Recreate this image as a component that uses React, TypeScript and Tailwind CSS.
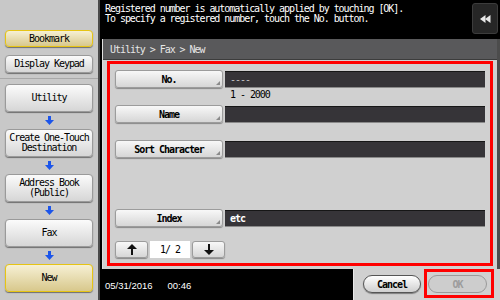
import React from 'react';

const mono = "font-['DejaVu_Sans_Mono',monospace] text-[10px] tracking-[-1.05px]";

function SideButton({ label, yellow, h = 'h-[28px]' }: { label: React.ReactNode; yellow?: boolean; h?: string }) {
  return (
    <div
      className={`mx-[5px] flex w-[88px] ${h} items-center justify-center rounded-[4px] border text-center leading-[10px] text-black shadow-[0_1px_1px_rgba(0,0,0,0.45)] ${mono} ${
        yellow
          ? 'border-[#e6c414] bg-gradient-to-b from-[#f6f0d4] to-[#d8c88c]'
          : 'border-[#9a9a9a] bg-gradient-to-b from-[#fbfbfb] to-[#d6d6d6]'
      }`}
    >
      {label}
    </div>
  );
}

function BlueArrow() {
  return (
    <div className="flex h-[17px] w-[98px] items-center justify-center">
      <svg width="9" height="9" viewBox="0 0 9 9">
        <rect x="3" y="0" width="3" height="4" fill="#1c55ea" />
        <polygon points="0,4 9,4 4.5,9" fill="#1c55ea" />
      </svg>
    </div>
  );
}

function FormButton({ label }: { label: string }) {
  return (
    <div
      className={`relative flex h-[18px] w-[108px] shrink-0 items-center justify-center rounded-[3px] border border-[#9c9c9c] bg-gradient-to-b from-[#f8f8f8] to-[#d6d6d6] font-bold text-black shadow-[0_1px_1px_rgba(0,0,0,0.35)] ${mono}`}
    >
      {label}
      <svg className="absolute bottom-[2px] right-[2px]" width="4" height="4" viewBox="0 0 4 4">
        <polygon points="4,0 4,4 0,4" fill="#8a8a8a" />
      </svg>
    </div>
  );
}

function Field({ text, white }: { text?: string; white?: boolean }) {
  return (
    <div
      className={`ml-[2px] flex h-[17px] flex-1 items-center border-t border-t-[#161616] border-b border-b-[#8a8a8a] bg-[#363438] pl-[5px] ${mono} ${
        white ? 'font-bold text-white' : 'text-[#c4c4c4]'
      }`}
    >
      {text}
    </div>
  );
}

function PageArrow({ up }: { up?: boolean }) {
  return (
    <div className="flex h-[17px] w-[33px] items-center justify-center rounded-[3px] border border-[#9c9c9c] bg-gradient-to-b from-[#f8f8f8] to-[#d6d6d6] shadow-[0_1px_1px_rgba(0,0,0,0.35)]">
      <svg width="10" height="11" viewBox="0 0 10 11">
        {up ? (
          <>
            <polygon points="5,0 10,5 0,5" fill="#111" />
            <rect x="4" y="4" width="2" height="7" fill="#111" />
          </>
        ) : (
          <>
            <rect x="4" y="0" width="2" height="7" fill="#111" />
            <polygon points="0,6 10,6 5,11" fill="#111" />
          </>
        )}
      </svg>
    </div>
  );
}

export default function App() {
  return (
    <div className="flex h-[300px] w-[500px] overflow-hidden bg-black">
      {/* Left sidebar */}
      <div className="flex w-[100px] shrink-0 flex-col border-r-2 border-[#4a4a4a] bg-[#c8c8c8]">
        <div className="flex h-[79px] flex-col gap-[8px] border-b border-b-[#a8a8a8] pt-[30px]">
          <SideButton label="Bookmark" yellow h="h-[17px]" />
          <SideButton label="Display Keypad" h="h-[18px]" />
        </div>
        <div className="flex flex-col pt-[5px]">
          <SideButton label="Utility" />
          <BlueArrow />
          <SideButton label={<span>Create One-Touch<br />Destination</span>} />
          <BlueArrow />
          <SideButton label={<span>Address Book<br />(Public)</span>} />
          <BlueArrow />
          <SideButton label="Fax" />
          <BlueArrow />
          <SideButton label="New" yellow />
        </div>
      </div>

      {/* Right column */}
      <div className="flex flex-1 flex-col bg-black">
        <div className="flex h-[39px]">
          <div className={`flex-1 pl-[5px] pt-[4px] leading-[10px] text-white ${mono}`}>
            <div>Registered number is automatically applied by touching [OK].</div>
            <div>To specify a registered number, touch the No. button.</div>
          </div>
          <div className="mr-[2px] mt-[3px] flex h-[31px] w-[26px] items-center justify-center rounded-[3px] border border-[#3c3c3c] bg-[#262626]">
            <svg width="11" height="8" viewBox="0 0 11 8">
              <polygon points="0,4 5.5,0 5.5,8" fill="#e8e8e8" />
              <polygon points="5,4 10.5,0 10.5,8" fill="#e8e8e8" />
            </svg>
          </div>
        </div>

        <div className="ml-[2px] flex h-[230px] flex-col border-l border-l-[#e0e0e0] border-r-[3px] border-r-[#4c4c4c] bg-[#d0d0d0]">
          <div className={`flex h-[21px] items-center border-b border-b-[#3c3c3c] bg-[#59595b] pl-[7px] text-[#e6e6e6] ${mono}`}>
            Utility &gt; Fax &gt; New
          </div>
          <div className="ml-[4px] mr-[4px] mt-[1px] h-[205px] border-[3px] border-[#ff0000] px-[5px] pt-[6px]">
            <div className="flex items-center">
              <FormButton label="No." />
              <Field text="----" />
            </div>
            <div className={`ml-[115px] mt-[2px] h-[10px] leading-[10px] text-black ${mono}`}>1 - 2000</div>
            <div className="mt-[5px] flex items-center">
              <FormButton label="Name" />
              <Field />
            </div>
            <div className="mt-[17px] flex items-center">
              <FormButton label="Sort Character" />
              <Field />
            </div>
            <div className="mt-[51px] flex items-center">
              <FormButton label="Index" />
              <Field text="etc" white />
            </div>
            <div className="mt-[14px] flex items-center gap-[2px]">
              <PageArrow up />
              <div className={`flex h-[17px] w-[40px] items-center justify-center bg-white text-black ${mono}`}>1/ 2</div>
              <PageArrow />
            </div>
          </div>
        </div>

        <div className="flex h-[31px]">
          <div className="mt-[3px] flex w-[253px] items-center gap-[15px] bg-black pl-[5px] font-['Liberation_Sans',sans-serif] text-[9.5px] text-white">
            <span>05/31/2016</span>
            <span>00:46</span>
          </div>
          <div className="flex flex-1 items-start border-l border-l-[#e8e8e8] bg-[#d0d0d0] pl-[9px]">
            <div className={`mt-[6px] flex h-[18px] w-[58px] items-center justify-center rounded-full border border-[#555] bg-gradient-to-b from-[#ffffff] to-[#cfcfcf] font-bold text-black shadow-[0_1px_1px_rgba(0,0,0,0.4)] ${mono}`}>
              Cancel
            </div>
            <div className="ml-[3px] h-[29px] w-[70px] border-[3px] border-[#ff0000] pl-[1px] pt-[3px]">
              <div className={`flex h-[18px] w-[59px] items-center justify-center rounded-full border border-[#9a9a9a] bg-[#cdcdcd] font-bold text-[#9c9c9c] ${mono}`}>
                OK
              </div>
            </div>
          </div>
        </div>
      </div>
    </div>
  );
}
